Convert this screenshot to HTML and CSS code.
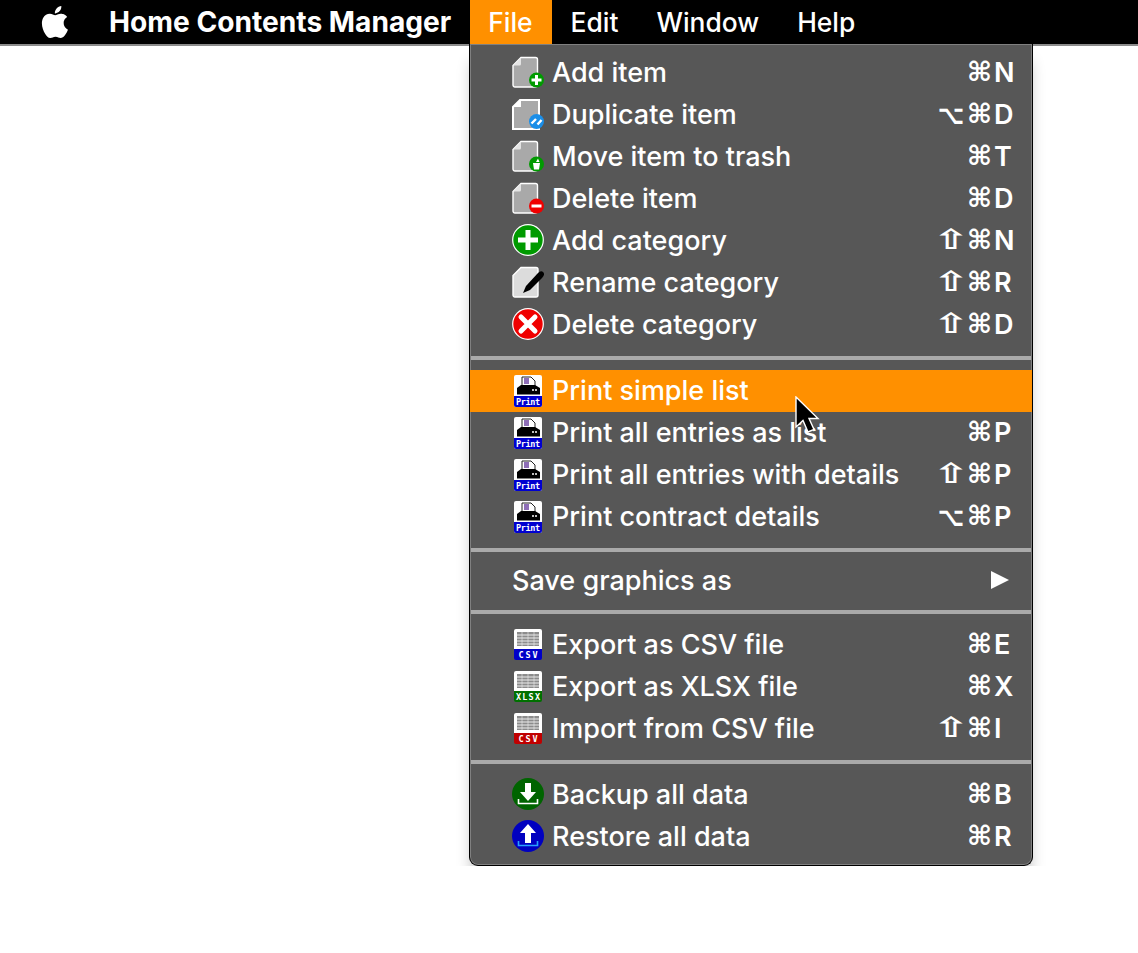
FILE: index.html
```html
<!DOCTYPE html>
<html lang="en">
<head>
    <meta charset="UTF-8">
    <meta name="viewport" content="width=device-width, initial-scale=1.0">
    <title>Home Contents Manager</title>
    <link rel="stylesheet" href="styles.css">
</head>
<body>

    <!-- shared icons -->
    <svg class="icon-defs" aria-hidden="true">
        <symbol id="doc" viewBox="0 0 32 32">
            <path d="M9 1.5H23.5a2 2 0 0 1 2 2V29a2 2 0 0 1-2 2H3a2 2 0 0 1-2-2V9.5z" fill="#a9a9a9" stroke="#fff" stroke-width="1.4"/>
            <path d="M9 2V8a1.5 1.5 0 0 1-1.5 1.5H1.5z" fill="#e4e4e4"/>
        </symbol>
        <symbol id="printer" viewBox="0 0 32 32">
            <rect x="2" y="0" width="28" height="32" rx="2" fill="#fff"/>
            <path d="M2 21H30V30a2 2 0 0 1-2 2H4a2 2 0 0 1-2-2z" fill="#0000d0"/>
            <path d="M10 2H19L23 6V12H10z" fill="#fff" stroke="#222" stroke-width="1"/>
            <path d="M12 4H17M12 6H17M12 8H17" stroke="#6a3fa0" stroke-width="1.3"/>
            <path d="M9 10H23L28 13V19.5H5V13z" fill="#000"/>
            <circle cx="21" cy="15" r="1" fill="#fff"/>
            <circle cx="24" cy="15" r="1" fill="#fff"/>
        </symbol>
        <symbol id="sheet" viewBox="0 0 32 32">
            <path d="M2 3a2 2 0 0 1 2-2H28a2 2 0 0 1 2 2V22H2z" fill="#fff"/>
            <path d="M5 4H27V18H5z" fill="#8c8c8c"/>
            <path d="M5 7H27M5 10H27M5 13H27M5 16H27" stroke="#ececec" stroke-width="1"/>
            <path d="M10 4V18M16 4V18M22 4V18" stroke="#ececec" stroke-width=".6"/>
        </symbol>
    </svg>

    <div class="menubar">
        <svg class="apple" viewBox="2.6 0 18.9 24"><path fill="#fff" d="M12.152 6.896c-.948 0-2.415-1.078-3.96-1.04-2.04.027-3.91 1.183-4.961 3.014-2.117 3.675-.546 9.103 1.519 12.09 1.013 1.454 2.208 3.09 3.792 3.039 1.52-.065 2.09-.987 3.935-.987 1.831 0 2.35.987 3.96.948 1.637-.026 2.676-1.48 3.676-2.948 1.156-1.688 1.636-3.325 1.662-3.415-.039-.013-3.182-1.221-3.22-4.857-.026-3.04 2.48-4.494 2.597-4.559-1.429-2.09-3.623-2.324-4.39-2.376-2-.156-3.675 1.09-4.61 1.09zM15.53 3.83c.843-1.012 1.4-2.427 1.245-3.83-1.207.052-2.662.805-3.532 1.818-.78.896-1.454 2.338-1.273 3.714 1.338.104 2.715-.688 3.559-1.701"/></svg>
        <span class="app-name">Home Contents Manager</span>
        <span class="menu-title active">File</span>
        <span class="menu-title">Edit</span>
        <span class="menu-title">Window</span>
        <span class="menu-title">Help</span>
    </div>

    <div class="menu">

        <div class="item">
            <svg class="icon" viewBox="0 0 32 32"><use href="#doc"/><circle cx="24.5" cy="24" r="7.5" fill="#009a00"/><path d="M24.5 19V29M19.5 24H29.5" stroke="#fff" stroke-width="3"/></svg>
            <span class="label">Add item</span><span class="mods"></span><span class="key">N</span>
        </div>
        <div class="item">
            <svg class="icon" viewBox="0 0 32 32"><path d="M8 2H27V31H1V9z" fill="#a9a9a9" stroke="#fff" stroke-width="2"/><path d="M9 1V9H1z" fill="#fff"/><circle cx="24.5" cy="23.5" r="7.5" fill="#1a8ee8"/><path d="M19.5 25.5L24 21M25.5 26.5L29.5 22" stroke="#fff" stroke-width="2.4"/></svg>
            <span class="label">Duplicate item</span><span class="mods">⌥</span><span class="key">D</span>
        </div>
        <div class="item">
            <svg class="icon" viewBox="0 0 32 32"><use href="#doc"/><circle cx="24.5" cy="24" r="7.5" fill="#009a00"/><path d="M21 23H28L27 29.5H22z" fill="#fff"/><path d="M24 22L26 18.5L27.5 22z" fill="#fff"/></svg>
            <span class="label">Move item to trash</span><span class="mods"></span><span class="key">T</span>
        </div>
        <div class="item">
            <svg class="icon" viewBox="0 0 32 32"><use href="#doc"/><circle cx="24.5" cy="24" r="7.5" fill="#f00000"/><path d="M19.5 24H29.5" stroke="#fff" stroke-width="3"/></svg>
            <span class="label">Delete item</span><span class="mods"></span><span class="key">D</span>
        </div>
        <div class="item">
            <svg class="icon" viewBox="0 0 32 32"><circle cx="16" cy="16" r="15.3" fill="#009a00" stroke="#fff" stroke-width="1.2"/><path d="M16 6V26M6 16H26" stroke="#fff" stroke-width="5"/></svg>
            <span class="label">Add category</span><span class="mods shift">⇧</span><span class="key">N</span>
        </div>
        <div class="item">
            <svg class="icon" viewBox="0 0 32 32"><path d="M9 1.5H24a2 2 0 0 1 2 2V29a2 2 0 0 1-2 2H3a2 2 0 0 1-2-2V9.5z" fill="#dcdcdc" stroke="#fff" stroke-width="1.4"/><path d="M11 27L14 20L26 7Q29 4 31.5 6.5Q33 9 30 12L18 24z" fill="#000"/></svg>
            <span class="label">Rename category</span><span class="mods shift">⇧</span><span class="key">R</span>
        </div>
        <div class="item">
            <svg class="icon" viewBox="0 0 32 32"><circle cx="16" cy="16" r="15.3" fill="#f00000" stroke="#fff" stroke-width="1.2"/><path d="M9 9L23 23M23 9L9 23" stroke="#fff" stroke-width="5" stroke-linecap="round"/></svg>
            <span class="label">Delete category</span><span class="mods shift">⇧</span><span class="key">D</span>
        </div>

        <div class="sep sep-first"></div>

        <div class="item print hover">
            <svg class="icon" viewBox="0 0 32 32"><use href="#printer"/><text x="16" y="29.5" class="tag-text" textLength="24">Print</text></svg>
            <span class="label">Print simple list</span>
        </div>
        <div class="item print">
            <svg class="icon" viewBox="0 0 32 32"><use href="#printer"/><text x="16" y="29.5" class="tag-text" textLength="24">Print</text></svg>
            <span class="label">Print all entries as list</span><span class="mods"></span><span class="key">P</span>
        </div>
        <div class="item print">
            <svg class="icon" viewBox="0 0 32 32"><use href="#printer"/><text x="16" y="29.5" class="tag-text" textLength="24">Print</text></svg>
            <span class="label">Print all entries with details</span><span class="mods shift">⇧</span><span class="key">P</span>
        </div>
        <div class="item print">
            <svg class="icon" viewBox="0 0 32 32"><use href="#printer"/><text x="16" y="29.5" class="tag-text" textLength="24">Print</text></svg>
            <span class="label">Print contract details</span><span class="mods">⌥</span><span class="key">P</span>
        </div>

        <div class="sep sep-print"></div>

        <div class="item submenu">
            <span class="label">Save graphics as</span>
            <svg class="arrow" viewBox="0 0 18 18"><path d="M0 0L18 9L0 18z" fill="#fff"/></svg>
        </div>

        <div class="sep sep-save"></div>

        <div class="item">
            <svg class="icon" viewBox="0 0 32 32"><use href="#sheet"/><path d="M2 21H30V30a2 2 0 0 1-2 2H4a2 2 0 0 1-2-2z" fill="#0000c8"/><text x="16" y="29.5" class="tag-text" textLength="19">CSV</text></svg>
            <span class="label">Export as CSV file</span><span class="mods"></span><span class="key">E</span>
        </div>
        <div class="item">
            <svg class="icon" viewBox="0 0 32 32"><use href="#sheet"/><path d="M2 21H30V30a2 2 0 0 1-2 2H4a2 2 0 0 1-2-2z" fill="#007000"/><text x="16" y="29.5" class="tag-text" textLength="24">XLSX</text></svg>
            <span class="label">Export as XLSX file</span><span class="mods"></span><span class="key">X</span>
        </div>
        <div class="item">
            <svg class="icon" viewBox="0 0 32 32"><use href="#sheet"/><path d="M2 21H30V30a2 2 0 0 1-2 2H4a2 2 0 0 1-2-2z" fill="#c00000"/><text x="16" y="29.5" class="tag-text" textLength="19">CSV</text></svg>
            <span class="label">Import from CSV file</span><span class="mods shift">⇧</span><span class="key">I</span>
        </div>

        <div class="sep sep-last"></div>

        <div class="item">
            <svg class="icon" viewBox="0 0 32 32"><circle cx="16" cy="16" r="16" fill="#006400"/><path d="M13 5H19V14H24L16 23L8 14H13z" fill="#fff"/><path d="M6.5 21V25.5H25.5V21" fill="none" stroke="#fff" stroke-width="1.6"/></svg>
            <span class="label">Backup all data</span><span class="mods"></span><span class="key">B</span>
        </div>
        <div class="item">
            <svg class="icon" viewBox="0 0 32 32"><circle cx="16" cy="16" r="16" fill="#0000c0"/><path d="M13 23H19V13H24L16 4L8 13H13z" fill="#fff"/><path d="M6.5 21V25.5H25.5V21" fill="none" stroke="#29a0ff" stroke-width="1.6"/></svg>
            <span class="label">Restore all data</span><span class="mods"></span><span class="key">R</span>
        </div>

        <svg class="cursor" viewBox="0 0 26 38"><path d="M1 1V31L8 24.5L13 36L19 33.5L14 22.5H23z" fill="#000" stroke="#fff" stroke-width="1.4"/></svg>
    </div>

</body>
</html>
```

FILE: styles.css
```css
body {
    margin: 0;
    background: #fff;
    font-family: Inter, "Liberation Sans", sans-serif;
    color: #fff;
}

.icon-defs {
    position: absolute;
    width: 0;
    height: 0;
}

.tag-text {
    font-family: "DejaVu Sans Mono", monospace;
    font-size: 8.5px;
    font-weight: 700;
    fill: #fff;
    text-anchor: middle;
}

/* top bar */
.menubar {
    position: relative;
    z-index: 1;
    display: flex;
    align-items: center;
    height: 44px;
    padding-left: 41px;
    background: #000;
    border-bottom: 2px solid #8c8c8c;
    font-size: 26.4px;
    font-weight: 500;
}

.apple {
    width: 28px;
    height: 32px;
    margin-right: 40px;
}

.app-name {
    font-size: 28.15px;
    font-weight: 700;
    margin-right: 19px;
}

.menu-title {
    display: flex;
    align-items: center;
    height: 44px;
    padding: 0 19px;
}

.menu-title.active {
    padding-left: 18px;
    background: #ff9000;
}

/* dropdown */
.menu {
    position: relative;
    z-index: 2;
    box-sizing: border-box;
    width: 564px;
    height: 822px;
    margin-top: -2px;
    margin-left: 469px;
    padding-top: 7px;
    background: #575757;
    border: 1px solid #000;
    border-top: 0;
    border-radius: 0 0 9px 9px;
    box-shadow: inset 0 0 0 1px #808080, 0 14px 16px -4px rgba(0, 0, 0, .3);
    font-size: 27px;
    font-weight: 500;
}

.item {
    display: grid;
    grid-template-columns: 32px 1fr auto 30px 19px;
    align-items: center;
    height: 42px;
    padding-left: 42px;
    padding-right: 19px;
}

.icon {
    width: 32px;
    height: 32px;
}

.label {
    margin-left: 8px;
    white-space: nowrap;
}

.mods {
    font-family: "DejaVu Sans", sans-serif;
    font-weight: 700;
    transform: scaleX(.85);
    transform-origin: right center;
}

.shift {
    font-size: 28px;
    line-height: 1;
    transform: translateX(5px) scaleX(1.55);
}

.key {
    grid-column: 5;
    position: relative;
    font-weight: 600;
}

/* command glyph sits between modifier and letter */
.key::before {
    content: "⌘";
    position: absolute;
    right: 100%;
    margin-right: 2px;
    font-family: "DejaVu Sans", sans-serif;
    font-weight: 700;
}

/* text in the print group sits a pixel higher than its row centre */
.print .label, .print .mods, .print .key {
    margin-bottom: 2px;
}

.hover {
    background: #ff9000;
}

.submenu {
    display: flex;
    justify-content: space-between;
    padding-right: 23px;
}

.submenu .label {
    margin-left: 0;
}

.arrow {
    width: 18px;
    height: 18px;
}

.sep {
    background: #aaa;
    height: 4px;
    margin: 0 1px;
}

.sep-first {
    margin-top: 11px;
    margin-bottom: 10px;
}

.sep-print {
    margin-top: 10px;
    margin-bottom: 7px;
}

.sep-save {
    margin-top: 9px;
    margin-bottom: 9px;
}

.sep-last {
    margin-top: 11px;
    margin-bottom: 9px;
}

.cursor {
    position: absolute;
    left: 325px;
    top: 352px;
    width: 26px;
    height: 38px;
}
```
